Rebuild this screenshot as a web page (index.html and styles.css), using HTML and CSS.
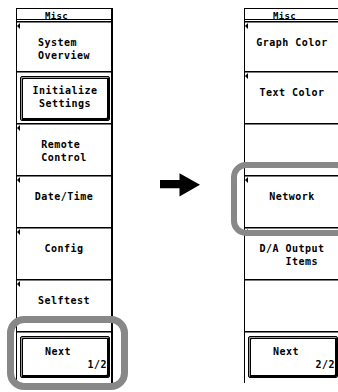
FILE: index.html
```html
<!DOCTYPE html>
<html>
<head>
<meta charset="utf-8">
<link rel="stylesheet" href="styles.css">
</head>
<body>
<div class="stage">
  <div class="panel">
    <div class="hdr"><div class="hdr-line"><span class="hdr-text">Misc</span></div></div>
    <div class="slot slot-first mark"><div class="lbl"><span class="blk">System
Overview</span></div></div>
    <div class="slot">
      <div class="key key-tall"><div class="key-lbl">Initialize
Settings</div></div>
    </div>
    <div class="slot mark"><div class="lbl"><span class="blk">Remote
Control</span></div></div>
    <div class="slot mark"><div class="lbl">Date/Time</div></div>
    <div class="slot mark"><div class="lbl">Config</div></div>
    <div class="slot mark"><div class="lbl">Selftest</div></div>
    <div class="slot slot-last">
      <div class="key key-next"><div class="next-lbl">Next</div><div class="page-lbl">1/2</div></div>
    </div>
  </div>

  <div class="mid">
    <svg class="arrow" width="40" height="24" viewBox="0 0 40 24"><polygon points="0,7 19.5,7 19.5,0.3 40,11.7 19.5,23.5 19.5,15.3 0,15.3" fill="#000"/></svg>
  </div>

  <div class="panel">
    <div class="hdr"><div class="hdr-line"><span class="hdr-text">Misc</span></div></div>
    <div class="slot slot-first mark"><div class="lbl">Graph Color</div></div>
    <div class="slot mark"><div class="lbl">Text Color</div></div>
    <div class="slot"></div>
    <div class="slot mark"><div class="lbl">Network</div></div>
    <div class="slot mark"><div class="lbl"><span class="blk">D/A Output
    Items</span></div></div>
    <div class="slot"></div>
    <div class="slot slot-last">
      <div class="key key-next"><div class="next-lbl">Next</div><div class="page-lbl">2/2</div></div>
    </div>
  </div>

  <div class="ring ring-left"></div>
  <div class="ring ring-right"></div>
</div>
</body>
</html>
```
FILE: styles.css
```css
html, body {
  margin: 0;
  padding: 0;
  background: #fff;
}

.stage {
  position: relative;
  width: 338px;
  height: 392px;
  overflow: hidden;
  box-sizing: border-box;
  padding: 8px 0 0 16px;
  display: flex;
  align-items: flex-start;
  font-family: "DejaVu Sans Mono", "Liberation Mono", monospace;
  font-weight: bold;
  font-size: 10px;
  letter-spacing: 0.5px;
  color: #000;
}

.panel {
  flex: 0 0 97px;
  width: 97px;
  box-sizing: border-box;
  border-left: 1px solid #000;
  border-right: 2px solid #000;
  display: flex;
  flex-direction: column;
}

.hdr {
  height: 13px;
  box-sizing: border-box;
  border-top: 1px solid #000;
}

.hdr-line {
  height: 10px;
  border-bottom: 1px solid #000;
  display: flex;
  justify-content: center;
  align-items: flex-end;
  padding-right: 15px;
}

.hdr-text {
  font-size: 9px;
  line-height: 6px;
  letter-spacing: 0.3px;
}

.slot {
  position: relative;
  height: 52px;
  box-sizing: border-box;
  border-top: 1px solid #000;
  box-shadow: inset 0 1px 0 #7a7a7a;
  display: flex;
  flex-direction: column;
}

.slot-first {
  height: 50px;
}

.mark::before {
  content: "";
  position: absolute;
  left: 0;
  top: 1px;
  width: 0;
  height: 0;
  border-right: 3px solid #000;
  border-top: 3.5px solid transparent;
  border-bottom: 3.5px solid transparent;
}

.lbl {
  padding-top: 14px;
  line-height: 13px;
  text-align: center;
  white-space: pre;
}

.blk {
  display: inline-block;
  text-align: left;
}

.key {
  margin: 4px 1px 0 3px;
  box-sizing: border-box;
  border: 1px solid #000;
  border-radius: 2px;
  box-shadow: inset 1px 1px 0 #9a9a9a, inset 2px 2px 0 #000, inset -2px -2px 0 #000;
}

.key-tall {
  height: 45px;
}

.key-next {
  height: 42px;
}

.key-lbl {
  padding-top: 7px;
  line-height: 13px;
  text-align: center;
  white-space: pre;
}

.next-lbl {
  padding: 8px 0 0 24px;
  line-height: 13px;
}

.page-lbl {
  line-height: 13px;
  text-align: right;
  padding-right: 2px;
}

.mid {
  flex: 0 0 131px;
  width: 131px;
  box-sizing: border-box;
  padding: 165px 0 0 47px;
}

.arrow {
  display: block;
}

.ring {
  position: absolute;
  box-sizing: border-box;
  border: 7px solid #888;
  border-radius: 17px;
}

.ring-left {
  left: 7px;
  top: 316px;
  width: 121px;
  height: 74px;
}

.ring-right {
  left: 231px;
  top: 162px;
  width: 120px;
  height: 74px;
  border-width: 6px;
  border-radius: 15px;
}
```
